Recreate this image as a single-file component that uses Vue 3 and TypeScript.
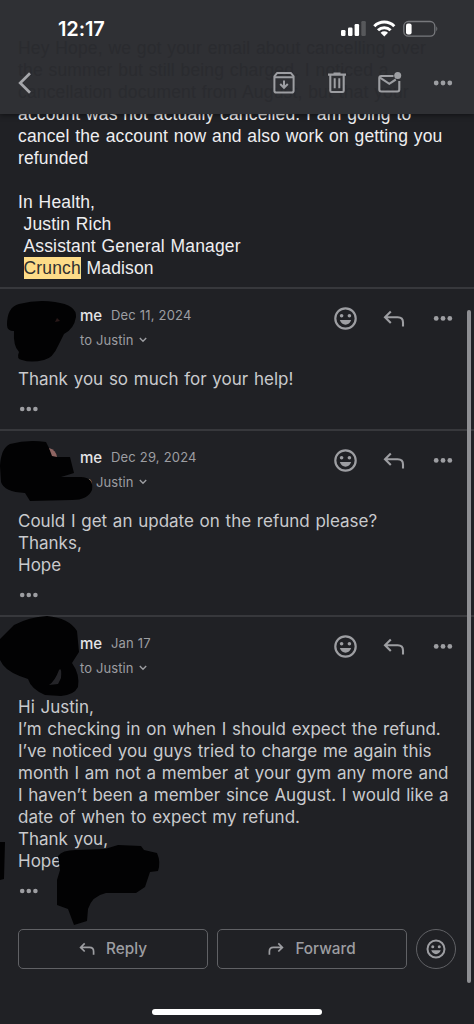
<script setup lang="ts">
interface Message {
    date: string;
    lines: string[];
}

const hiddenLines = [
    "Hey Hope, we got your email about cancelling over",
    "the summer but still being charged. I noticed a",
    "cancellation document from August, but that your",
];

const messages: Message[] = [
    { date: "Dec 11, 2024", lines: ["Thank you so much for your help!"] },
    {
        date: "Dec 29, 2024",
        lines: ["Could I get an update on the refund please?", "Thanks,", "Hope"],
    },
    {
        date: "Jan 17",
        lines: [
            "Hi Justin,",
            "I’m checking in on when I should expect the refund.",
            "I’ve noticed you guys tried to charge me again this",
            "month I am not a member at your gym any more and",
            "I haven’t been a member since August. I would like a",
            "date of when to expect my refund.",
            "Thank you,",
            "Hope",
        ],
    },
];
</script>

<template>
    <div class="screen">
        <header class="top">
            <div class="under">
                <div v-for="line in hiddenLines" :key="line">{{ line }}</div>
            </div>
            <div class="status">
                <span class="time">12:17</span>
                <svg class="status-icons" width="100" height="20" viewBox="0 0 100 20">
                    <g fill="#fff">
                        <rect x="1" y="12" width="4.5" height="6" rx="1.2" />
                        <rect x="8" y="9.5" width="4.5" height="8.5" rx="1.2" />
                        <rect x="14.6" y="6" width="4.5" height="12" rx="1.2" />
                    </g>
                    <rect x="21.3" y="3" width="4.5" height="15" rx="1.2" fill="#57585b" />
                    <g fill="none" stroke="#fff" stroke-width="3">
                        <path d="M34.3 8.3a14 14 0 0 1 20 0" />
                        <path d="M38 12.2a9 9 0 0 1 12.6 0" />
                    </g>
                    <path d="M40.6 14.7a5.4 5.4 0 0 1 7.4 0L44.3 18.4z" fill="#fff" />
                    <rect x="63.8" y="3.5" width="31" height="14.6" rx="4.6" fill="none" stroke="#77787c" stroke-width="1.3" />
                    <path d="M96.3 8.3q2 2.5 0 5z" fill="#77787c" />
                    <rect x="66" y="5.4" width="5.6" height="11" rx="2" fill="#fff" />
                </svg>
            </div>
            <div class="toolbar">
                <svg class="back" width="16" height="24" viewBox="0 0 16 24">
                    <path d="M13 2.2 3.2 12 13 21.8" fill="none" stroke="#a5a6aa" stroke-width="2.7" />
                </svg>
                <svg class="archive" width="22" height="22" viewBox="0 0 22 22">
                    <path d="M4 1.1h14l2.6 3.3v14.3q0 1.8-1.8 1.8H3.2q-1.8 0-1.8-1.8V4.4z" fill="none" stroke="currentColor" stroke-width="2" stroke-linejoin="round" />
                    <path d="M1.8 5.2h18.4M11 8.5v7M7.2 12l3.8 3.8 3.8-3.8" fill="none" stroke="currentColor" stroke-width="2" />
                </svg>
                <svg class="trash" width="20" height="22" viewBox="0 0 20 22">
                    <path d="M1 2.6h18M6.5 1.5h7M3.3 3v15.8q0 1.2 1.2 1.2h11q1.2 0 1.2-1.2V3" fill="none" stroke="currentColor" stroke-width="2.1" />
                    <path d="M7.7 6.3v10M12.3 6.3v10" stroke="currentColor" stroke-width="2" />
                </svg>
                <svg class="mail" width="26" height="24" viewBox="0 0 26 24">
                    <path d="M16.5 5H4.3Q2.3 5 2.3 7v11.5q0 2 2 2h16q2 0 2-2V10" fill="none" stroke="currentColor" stroke-width="2.1" />
                    <path d="m3 6.7 9.3 6.1 6.5-4.3" fill="none" stroke="currentColor" stroke-width="2.1" />
                    <circle cx="20.7" cy="4.4" r="3.5" fill="currentColor" />
                </svg>
                <svg class="more" width="20" height="6" viewBox="0 0 20 6" fill="currentColor">
                    <circle cx="3.2" cy="3" r="2.4" />
                    <circle cx="10" cy="3" r="2.4" />
                    <circle cx="16.8" cy="3" r="2.4" />
                </svg>
            </div>
        </header>

        <section class="first">
            <div class="l1">account was not actually cancelled. I am going to</div>
            <div>cancel the account now and also work on getting you</div>
            <div>refunded</div>
            <br />
            <div>In Health,</div>
            <div class="sign">Justin Rich</div>
            <div class="sign">Assistant General Manager</div>
            <div class="sign"><mark>Crunch</mark> Madison</div>
        </section>

        <section v-for="message in messages" :key="message.date" class="message">
            <div class="head">
                <div class="who">
                    <div class="from"><strong>me</strong><span>{{ message.date }}</span></div>
                    <div class="to">
                        to Justin
                        <svg width="8" height="6" viewBox="0 0 8 6">
                            <path d="m.8 1 3.2 3.2L7.2 1" fill="none" stroke="currentColor" stroke-width="1.4" />
                        </svg>
                    </div>
                </div>
                <svg width="24" height="24" viewBox="0 0 24 24">
                    <circle cx="12.5" cy="12.5" r="10.2" fill="none" stroke="currentColor" stroke-width="2.2" />
                    <circle cx="8.6" cy="9.8" r="1.8" fill="currentColor" />
                    <circle cx="16.4" cy="9.8" r="1.8" fill="currentColor" />
                    <path d="M6.8 14.1h11.4q-1.7 4.6-5.7 4.6t-5.7-4.6z" fill="currentColor" />
                </svg>
                <svg class="reply" width="22" height="18" viewBox="0 0 22 18">
                    <path d="M7.8 1.5 2 7.3l5.8 5.8M2.4 7.3h12.3q5.3 0 5.3 5.2v4" fill="none" stroke="currentColor" stroke-width="2.1" />
                </svg>
                <svg class="more" width="20" height="6" viewBox="0 0 20 6" fill="currentColor">
                    <circle cx="3.2" cy="3.4" r="2.4" />
                    <circle cx="10" cy="3.4" r="2.4" />
                    <circle cx="16.8" cy="3.4" r="2.4" />
                </svg>
            </div>
            <div class="body">
                <div v-for="line in message.lines" :key="line">{{ line }}</div>
            </div>
            <svg class="quote" width="20" height="6" viewBox="0 0 20 6" fill="currentColor">
                <circle cx="3.2" cy="3" r="2.3" />
                <circle cx="9.8" cy="3" r="2.3" />
                <circle cx="16.4" cy="3" r="2.3" />
            </svg>
        </section>

        <div class="actions">
            <button class="action">
                <svg width="16" height="14" viewBox="0 0 16 14">
                    <path d="M5.7 1.3 1.6 5.4l4.1 4.1M2 5.4h8.6q4 0 4 4v3.3" fill="none" stroke="currentColor" stroke-width="1.7" />
                </svg>
                Reply
            </button>
            <button class="action">
                <svg width="16" height="14" viewBox="0 0 16 14">
                    <path d="m10.3 1.3 4.1 4.1-4.1 4.1M14 5.4H5.4q-4 0-4 4v3.3" fill="none" stroke="currentColor" stroke-width="1.7" />
                </svg>
                Forward
            </button>
            <button class="react" aria-label="React">
                <svg width="20" height="20" viewBox="0 0 24 24">
                    <circle cx="12" cy="12" r="10.2" fill="none" stroke="currentColor" stroke-width="2.4" />
                    <circle cx="8.1" cy="9.3" r="1.8" fill="currentColor" />
                    <circle cx="15.9" cy="9.3" r="1.8" fill="currentColor" />
                    <path d="M6.3 13.6h11.4q-1.7 4.6-5.7 4.6t-5.7-4.6z" fill="currentColor" />
                </svg>
            </button>
        </div>

        <!-- marker scribbles over the avatars and the surname -->
        <svg class="scribbles" width="474" height="1024" viewBox="0 0 474 1024">
            <path d="M7 325Q7 307 19 304 38 299 55 302 77 305 76 317 74 329 64 334L58 346Q53 358 44 360 31 363 22 360 16 359 19 352 13 346 14 331 7 331 7 325z" />
            <path d="M0 466Q1 448 10 444 28 439 46 442L50 450 57 457 70 457 74 473 61 477 82 477Q94 478 92 490 88 500 72 500L30 501 25 493Q4 492 1 482z" />
            <path d="M0 639 14 625Q29 617 47 616 69 618 77 631L79 652 72 663Q80 674 78 687 74 695 61 696L45 695Q31 689 28 679 9 673 3 665L0 660z" />
            <path d="M58 856Q62 850 76 850L105 849 118 845 141 846 144 850 157 853Q161 862 158 871L150 872 145 887 136 893 106 893Q92 896 88 909L87 921 74 925 68 909 57 905 57 880 60 870z" />
            <path d="M0 842 5 842 4 879 0 880z" />
            <path d="M49 448Q56 450 57 457L52 456z" fill="#8f6562" />
            <path d="M59 670Q62 667 61 678L58 684 49 685Q55 681 59 670z" fill="#242428" />
            <path d="M57 318 60 321 55 322z" fill="#2a1919" />
        </svg>

        <div class="scrollbar"></div>
        <div class="home"></div>
    </div>
</template>

<style>
body {
    background: #202125;
}
</style>

<style scoped>
.screen {
    position: relative;
    width: 474px;
    height: 1024px;
    overflow: hidden;
    background: #202125;
    color: #9d9ea2;
    font-family: Inter, "Liberation Sans", sans-serif;
}

svg {
    display: block;
    flex: none;
}

.top {
    position: relative;
    z-index: 2;
    height: 114px;
    background: #2f3034;
    box-shadow: 0 1px 5px rgba(0, 0, 0, 0.5);
}

.under {
    position: absolute;
    top: 37px;
    left: 18px;
    color: #2a2b2f;
    font: 17.5px/22px "Liberation Sans", sans-serif;
    letter-spacing: 0.15px;
    word-spacing: 0.7px;
    white-space: nowrap;
}

.status {
    position: relative;
    display: flex;
    align-items: center;
    justify-content: space-between;
    height: 56px;
    padding: 0 34px 0 58px;
}

.time {
    padding-top: 2px;
    color: #fff;
    font-size: 20px;
    font-weight: 600;
    line-height: 24px;
    letter-spacing: -0.1px;
}

.toolbar {
    position: relative;
    display: flex;
    align-items: center;
    height: 54px;
    padding: 0 21px 0 17px;
}

.back {
    margin-right: auto;
}

.trash {
    margin-left: 32px;
}

.mail {
    margin-left: 30px;
}

.toolbar .more {
    margin-left: 30px;
}

.first {
    height: 173px;
    overflow: hidden;
    padding-left: 18px;
    color: #eeeef0;
    font: 17.5px/22px "Liberation Sans", sans-serif;
    letter-spacing: 0.15px;
    word-spacing: 0.7px;
    white-space: nowrap;
}

.first .l1 {
    margin-top: -11px;
}

.sign {
    padding-left: 5.5px;
}

mark {
    display: inline-block;
    background: #fddc88;
    color: #303030;
}

.message {
    border-top: 2px solid #37383c;
}

.head {
    display: flex;
    align-items: flex-start;
    height: 79px;
    padding: 17px 21px 0 80px;
    box-sizing: border-box;
}

.who {
    flex: 1;
}

.from {
    display: flex;
    align-items: center;
    gap: 9px;
    height: 18px;
    font-size: 13px;
    letter-spacing: 0.2px;
}

.from strong {
    color: #e5e5e8;
    font-size: 15px;
    font-weight: 500;
    letter-spacing: -0.1px;
}

.to {
    display: flex;
    align-items: center;
    gap: 5px;
    height: 18px;
    margin-top: 7px;
    font-size: 13px;
    letter-spacing: 0.1px;
}

.reply {
    margin: 4px 0 0 26px;
}

.head .more {
    margin: 9px 0 0 28px;
}

.body {
    padding-left: 18px;
    color: #c9cacd;
    font-size: 17px;
    line-height: 22px;
    word-spacing: 0.95px;
    white-space: nowrap;
}

.quote {
    margin: 16px 0 17px 19px;
}

.actions {
    display: flex;
    padding: 18px 18px 0;
    gap: 9px;
}

.action,
.react {
    display: flex;
    align-items: center;
    justify-content: center;
    box-sizing: border-box;
    height: 40px;
    padding: 0;
    border: 1px solid #606165;
    background: transparent;
    color: #9d9ea2;
}

.action {
    flex: 1;
    gap: 11px;
    border-radius: 5px;
    font: 500 15.3px/20px Inter, sans-serif;
}

.react {
    width: 40px;
    border-radius: 50%;
}

.scribbles {
    position: absolute;
    inset: 0;
    fill: #020203;
}

.scrollbar {
    position: absolute;
    top: 310px;
    right: 3px;
    width: 4px;
    height: 673px;
    border-radius: 2px;
    background: #8e8f93;
}

.home {
    position: absolute;
    top: 1009px;
    left: 152px;
    width: 170px;
    height: 6px;
    border-radius: 3px;
    background: #fff;
}
</style>
